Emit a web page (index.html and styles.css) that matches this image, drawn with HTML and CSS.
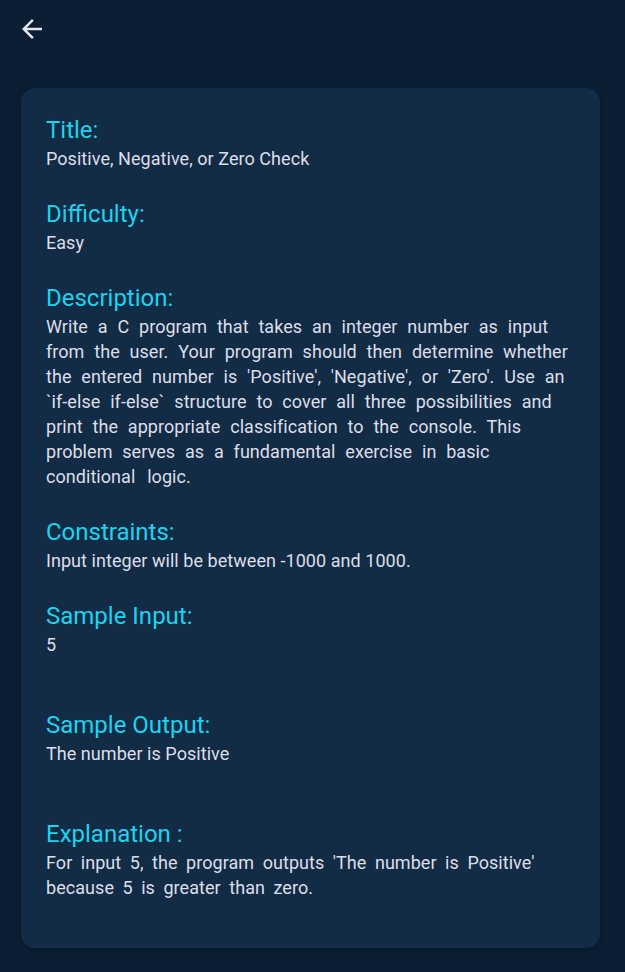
FILE: index.html
```html
<!DOCTYPE html>
<html>
<head>
<meta charset="utf-8">
<link rel="stylesheet" href="styles.css">
</head>
<body>
<div class="page">
  <header class="topbar">
    <svg class="back" width="30" height="30" viewBox="0 0 24 24"><path d="M20 11H7.83l5.59-5.59L12 4l-8 8 8 8 1.41-1.41L7.83 13H20v-2z" fill="#e6e6ee"/></svg>
  </header>
  <main class="card">
    <section class="sec">
      <h2 class="label">Title:</h2>
      <p class="val">Positive, Negative, or Zero Check</p>
    </section>
    <section class="sec">
      <h2 class="label">Difficulty:</h2>
      <p class="val">Easy</p>
    </section>
    <section class="sec">
      <h2 class="label">Description:</h2>
      <p class="val desc">Write a C program that takes an integer number as input<br>from the user. Your program should then determine whether<br>the entered number is 'Positive', 'Negative', or 'Zero'. Use an<br>`if-else if-else` structure to cover all three possibilities and<br>print the appropriate classification to the console. This<br>problem serves as a fundamental exercise in basic<br>conditional <span class="gap">logic.</span></p>
    </section>
    <section class="sec">
      <h2 class="label">Constraints:</h2>
      <p class="val">Input integer will be between -1000 and 1000.</p>
    </section>
    <section class="sec">
      <h2 class="label">Sample Input:</h2>
      <p class="val extra">5</p>
    </section>
    <section class="sec">
      <h2 class="label">Sample Output:</h2>
      <p class="val extra">The number is Positive</p>
    </section>
    <section class="sec">
      <h2 class="label">Explanation :</h2>
      <p class="val expl">For input 5, the program outputs 'The number is Positive'<br>because 5 is greater than zero.</p>
    </section>
  </main>
</div>
</body>
</html>
```
FILE: styles.css
```css
html, body { margin: 0; padding: 0; }
body {
  background: #0b1e34;
  font-family: Roboto, "Noto Sans", sans-serif;
  width: 625px;
  height: 972px;
  overflow: hidden;
}
.page { padding: 0; }
.topbar {
  height: 88px;
  box-sizing: border-box;
  padding: 14px 0 0 17px;
}
.back { display: block; }
.card {
  margin: 0 25px 0 21px;
  background: #122c46;
  border-radius: 14px;
  padding: 28px 34px 40px 25px;
  box-shadow: 0 2px 6px rgba(0,0,0,0.25);
  height: 860px;
  box-sizing: border-box;
}
.sec { margin-bottom: 29px; }
.label {
  margin: 0 0 2px 0;
  font-weight: 400;
  font-size: 24px;
  line-height: 28px;
  color: #1fd2ee;
}
.val {
  margin: 0;
  font-size: 18px;
  line-height: 25px;
  color: #dedee8;
  letter-spacing: 0.05px;
}
.desc { word-spacing: 5.3px; white-space: pre; }
.gap { margin-left: 2px; }
.expl { word-spacing: 4px; white-space: pre; }
.extra { padding-bottom: 25px; }
```
